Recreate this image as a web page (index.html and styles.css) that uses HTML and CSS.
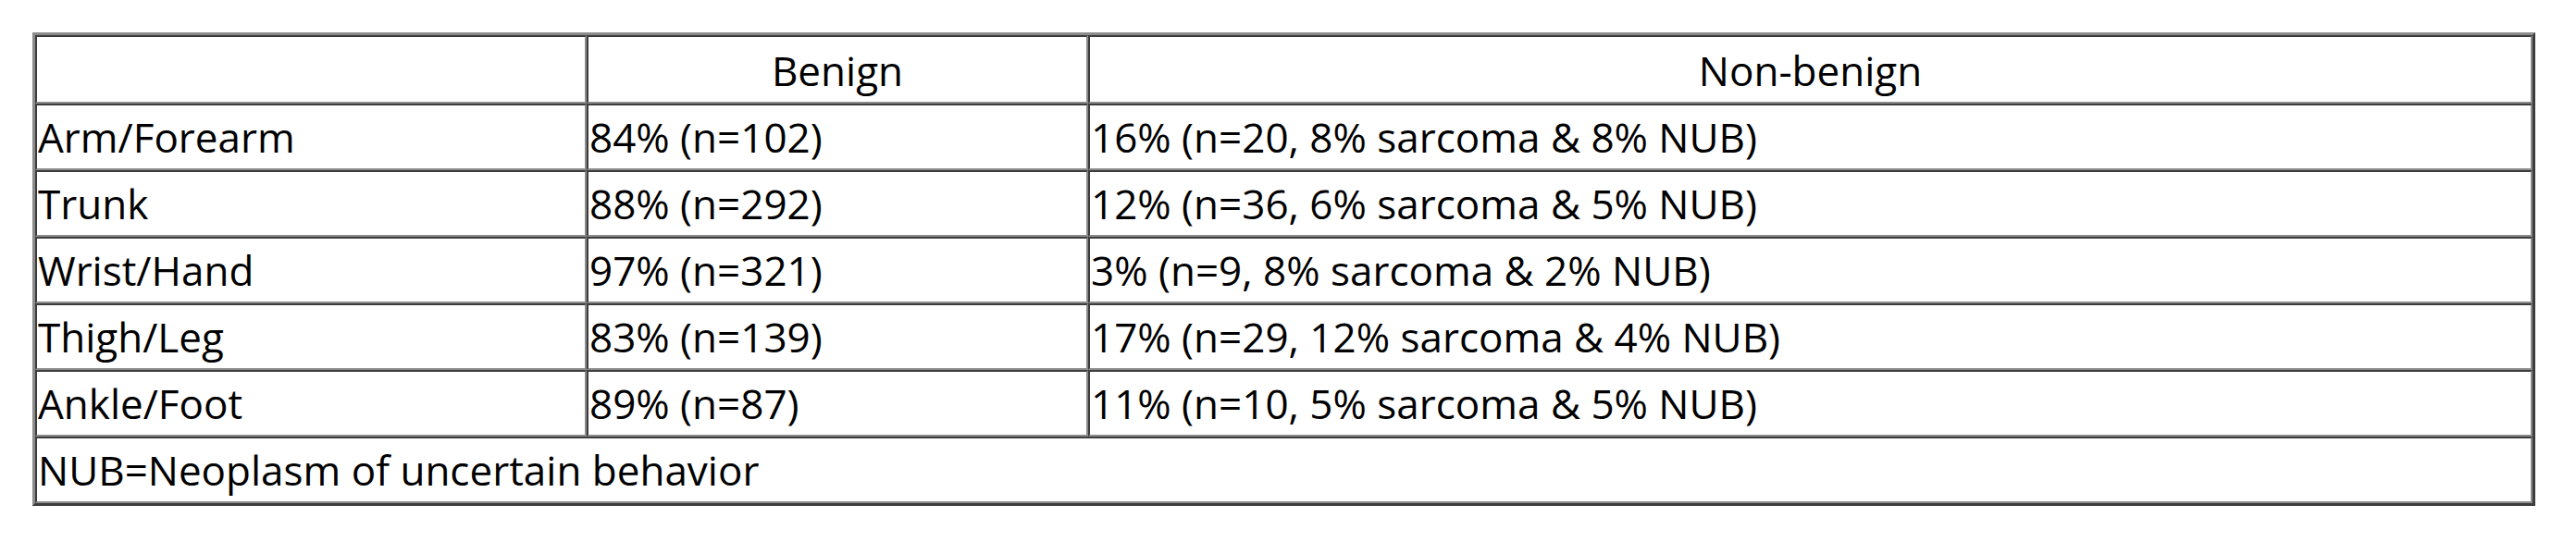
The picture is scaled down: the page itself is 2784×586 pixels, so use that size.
FILE: index.html
```html
<!DOCTYPE html>
<html>
<head>
    <title>Location and diagnosis</title>
    <link rel="stylesheet" href="styles.css">
</head>
<body>
    <table class="data-table">
        <colgroup>
            <col class="col-site">
            <col class="col-benign">
            <col class="col-nonbenign">
        </colgroup>
        <tr class="head-row">
            <td></td>
            <td class="center">Benign</td>
            <td class="center">Non-benign</td>
        </tr>
        <tr>
            <td>Arm/Forearm</td>
            <td>84% (n=102)</td>
            <td>16% (n=20, 8% sarcoma &amp; 8% NUB)</td>
        </tr>
        <tr>
            <td>Trunk</td>
            <td>88% (n=292)</td>
            <td>12% (n=36, 6% sarcoma &amp; 5% NUB)</td>
        </tr>
        <tr>
            <td>Wrist/Hand</td>
            <td>97% (n=321)</td>
            <td>3% (n=9, 8% sarcoma &amp; 2% NUB)</td>
        </tr>
        <tr>
            <td>Thigh/Leg</td>
            <td>83% (n=139)</td>
            <td>17% (n=29, 12% sarcoma &amp; 4% NUB)</td>
        </tr>
        <tr>
            <td>Ankle/Foot</td>
            <td>89% (n=87)</td>
            <td>11% (n=10, 5% sarcoma &amp; 5% NUB)</td>
        </tr>
        <tr>
            <td colspan="3">NUB=Neoplasm of uncertain behavior</td>
        </tr>
    </table>
</body>
</html>
```

FILE: styles.css
```css
body {
    margin: 0;
    padding: 35px 0 0 35px;
    background-color: #fff;
    color: #000;
    font-family: "Open Sans", "Noto Sans", sans-serif;
    font-size: 44px;
}

.data-table {
    width: 2705px;
    table-layout: fixed;
    border-collapse: separate;
    border-spacing: 0;
    border-style: solid;
    border-width: 3px;
    border-color: #8c8c8c #3c3c3c #3c3c3c #8c8c8c;
}

.col-site {
    width: 596px;
}

.col-benign {
    width: 542px;
}

.data-table td {
    border-style: solid;
    border-width: 2px;
    border-color: #3c3c3c #8c8c8c #8c8c8c #3c3c3c;
    padding: 2px 1px;
    line-height: 64px;
    white-space: nowrap;
    text-align: left;
}

.data-table .head-row td {
    padding-top: 4px;
}

.data-table td.center {
    text-align: center;
}
```
